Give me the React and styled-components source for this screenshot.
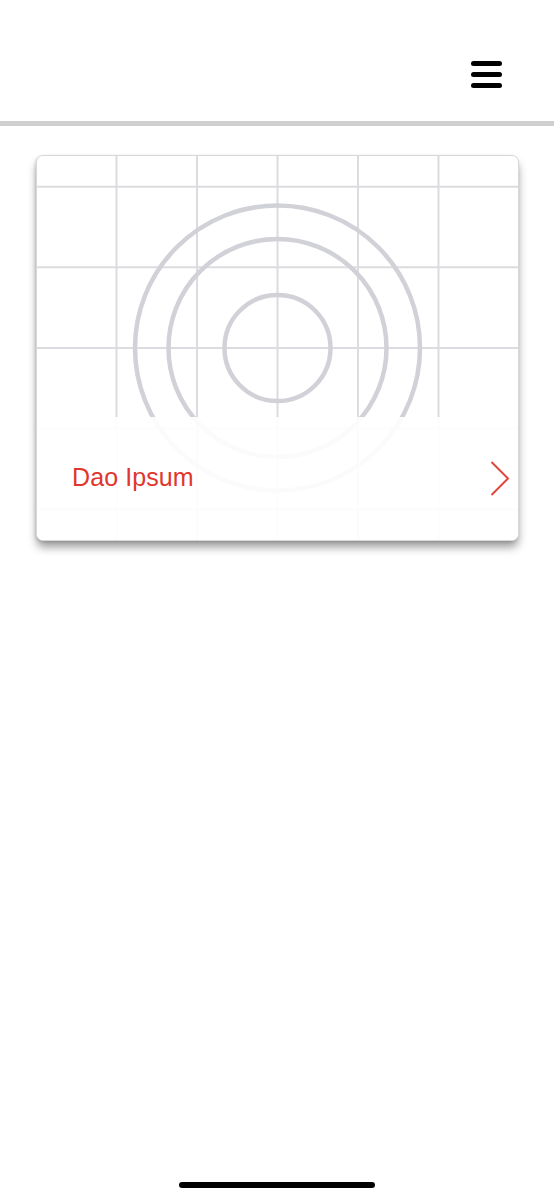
import React from "react";
import styled, { createGlobalStyle } from "styled-components";

const GlobalStyle = createGlobalStyle`
  html, body { margin: 0; padding: 0; background: #ffffff; }
  body { font-family: "Liberation Sans", Arial, sans-serif; }
`;

const Page = styled.div`
  min-height: 1200px;
  display: flex;
  flex-direction: column;
  background: #ffffff;
`;

const Header = styled.header`
  height: 121px;
  box-sizing: border-box;
  padding: 61px 52px 0 0;
  display: flex;
  justify-content: flex-end;
  align-items: flex-start;
`;

const MenuButton = styled.button`
  width: 31px;
  padding: 0;
  border: 0;
  background: transparent;
  display: flex;
  flex-direction: column;
  gap: 6.7px;
  cursor: pointer;
`;

const MenuBar = styled.span`
  display: block;
  height: 4.5px;
  width: 100%;
  border-radius: 2.5px;
  background: #000000;
`;

const Divider = styled.div`
  height: 5px;
  background: #d0d0d0;
`;

const Main = styled.main`
  padding: 29px 35px 0 36px;
`;

const Card = styled.article`
  position: relative;
  width: 483px;
  height: 386px;
  box-sizing: border-box;
  border: 1px solid #d8d8d8;
  border-radius: 7px;
  overflow: hidden;
  background: #ffffff;
  box-shadow: 0 7px 10px -1px rgba(0, 0, 0, 0.4), -1px 1px 3px rgba(0, 0, 0, 0.12);
  display: flex;
  flex-direction: column;
  justify-content: flex-end;
`;

const Art = styled.svg`
  position: absolute;
  left: -1px;
  top: -1px;
  width: 483px;
  height: 386px;
`;

const Footer = styled.div`
  position: relative;
  height: 123px;
  background: rgba(255, 255, 255, 0.9);
  display: flex;
  align-items: center;
  justify-content: space-between;
  padding: 0 8px 0 35px;
`;

const Title = styled.span`
  font-family: "Liberation Sans", Arial, sans-serif;
  font-size: 25px;
  color: #e0362d;
  letter-spacing: 0.1px;
  margin-top: -2px;
`;

const Chevron = styled.svg`
  width: 20px;
  height: 36px;
`;

const HomeIndicator = styled.div`
  margin: auto auto 12px;
  width: 196px;
  height: 6px;
  border-radius: 3px;
  background: #000000;
`;

const cols = [80.5, 161, 241.5, 322, 402.5];
const rows = [31.7, 112.3, 193, 273.6, 354.2];

function GridArt() {
  return (
    <Art viewBox="0 0 483 386" aria-hidden="true">
      {cols.map((x) => (
        <line key={"c" + x} x1={x} y1={0} x2={x} y2={386} stroke="#dcdce0" strokeWidth="2" />
      ))}
      {rows.map((y) => (
        <line key={"r" + y} x1={0} y1={y} x2={483} y2={y} stroke="#dcdce0" strokeWidth="2" />
      ))}
      <g fill="none" stroke="#d1d1d8" strokeWidth="4.5">
        <circle cx="241.5" cy="193" r="53" />
        <circle cx="241.5" cy="193" r="109" />
        <circle cx="241.5" cy="193" r="142.5" />
      </g>
    </Art>
  );
}

export default function App() {
  return (
    <>
      <GlobalStyle />
      <Page>
        <Header>
          <MenuButton aria-label="Menu">
            <MenuBar />
            <MenuBar />
            <MenuBar />
          </MenuButton>
        </Header>
        <Divider />
        <Main>
          <Card>
            <GridArt />
            <Footer>
              <Title>Dao Ipsum</Title>
              <Chevron viewBox="0 0 20 36">
                <polyline points="1.5,1 18,17.5 1.5,34" fill="none" stroke="#e0463b" strokeWidth="2" />
              </Chevron>
            </Footer>
          </Card>
        </Main>
        <HomeIndicator />
      </Page>
    </>
  );
}
